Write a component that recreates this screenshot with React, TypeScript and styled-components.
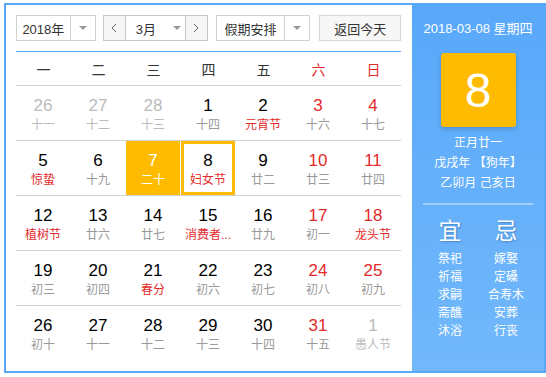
import React from "react";
import styled, { createGlobalStyle } from "styled-components";

const GlobalStyle = createGlobalStyle`
  html, body { margin: 0; padding: 0; background: #fff; }
  body { font-family: "Liberation Sans", "Noto Sans CJK SC", sans-serif; color: #333; }
`;

const BLUE = "#5aa9f9";
const ORANGE = "#ffbb00";
const RED = "#e32a2a";

const Frame = styled.div`
  margin: 3px 0 0 4px;
  width: 542px;
  height: 370px;
  box-sizing: border-box;
  border: 2px solid ${BLUE};
  display: flex;
  overflow: hidden;
`;

const Left = styled.div`
  width: 406px;
  box-sizing: border-box;
  padding: 10px 11px 0 10px;
  display: flex;
  flex-direction: column;
  background: #fff;
`;

const Toolbar = styled.div`
  display: flex;
  height: 26px;
  font-size: 13px;
  color: #333;
`;

const SelectBox = styled.div<{ $w: number; $ml?: number }>`
  display: flex;
  width: ${(p) => p.$w}px;
  margin-left: ${(p) => p.$ml ?? 0}px;
  height: 26px;
  box-sizing: border-box;
  border: 1px solid #d2d2d2;
  background: #fff;
`;

const SelectLabel = styled.div`
  flex: 1;
  display: flex;
  align-items: center;
  justify-content: center;
  white-space: nowrap;
`;

const ArrowPart = styled.div<{ $divider?: boolean }>`
  width: 24px;
  display: flex;
  align-items: center;
  justify-content: center;
  border-left: ${(p) => (p.$divider ? "1px solid #d2d2d2" : "none")};
`;

const Caret = styled.span`
  width: 0;
  height: 0;
  border-left: 4px solid transparent;
  border-right: 4px solid transparent;
  border-top: 4px solid #999;
`;

const MonthGroup = styled.div`
  display: flex;
  margin-left: 7px;
  height: 26px;
  box-sizing: border-box;
  border: 1px solid #c6c6c6;
`;

const NavBtn = styled.div<{ $side: "l" | "r" }>`
  width: 21px;
  display: flex;
  align-items: center;
  justify-content: center;
  background: #f6f6f6;
  color: #777;
  ${(p) => (p.$side === "l" ? "border-right: 1px solid #c6c6c6;" : "border-left: 1px solid #c6c6c6;")}
`;

const MonthSel = styled.div`
  width: 59px;
  display: flex;
  align-items: center;
  padding-left: 10px;
  box-sizing: border-box;
  gap: 17px;
`;

const TodayBtn = styled.div`
  margin-left: 9px;
  width: 82px;
  height: 26px;
  box-sizing: border-box;
  border: 1px solid #d6d6d6;
  background: #f7f7f7;
  display: flex;
  align-items: center;
  justify-content: center;
  color: #333;
`;

const BlueRule = styled.div`
  margin-top: 10px;
  height: 1px;
  background: ${BLUE};
`;

const Grid = styled.div`
  display: grid;
  grid-template-columns: repeat(7, 55px);
`;

const WeekHead = styled(Grid)`
  height: 33px;
  border-bottom: 1px solid #d0d0d0;
  align-items: center;
`;

const WeekName = styled.div<{ $red?: boolean }>`
  text-align: center;
  font-size: 14px;
  color: ${(p) => (p.$red ? RED : "#333")};
`;

const Row = styled(Grid)<{ $last?: boolean }>`
  height: 54px;
  border-bottom: ${(p) => (p.$last ? "none" : "1px solid #d0d0d0")};
`;

const Cell = styled.div<{ $sel?: boolean; $today?: boolean }>`
  width: 54px;
  height: 54px;
  box-sizing: border-box;
  padding-top: 10px;
  display: flex;
  flex-direction: column;
  align-items: center;
  background: ${(p) => (p.$sel ? ORANGE : "transparent")};
  box-shadow: ${(p) => (p.$today ? `inset 0 0 0 3px ${ORANGE}` : "none")};
`;

type Tone = "normal" | "red" | "other" | "white";
const toneColor = (t: Tone, lunar: boolean) => {
  if (t === "white") return "#fff";
  if (t === "other") return "#bbb";
  if (t === "red") return RED;
  return lunar ? "#999" : "#000";
};

const DayNum = styled.div<{ $tone: Tone }>`
  font-size: 17px;
  line-height: 20px;
  color: ${(p) => toneColor(p.$tone, false)};
`;

const Lunar = styled.div<{ $tone: Tone }>`
  font-size: 12px;
  line-height: 18px;
  white-space: nowrap;
  color: ${(p) => toneColor(p.$tone, true)};
`;

const Side = styled.div`
  width: 132px;
  background: linear-gradient(to bottom, #58a8fa, #72b8fb);
  color: #fff;
  display: flex;
  flex-direction: column;
  align-items: center;
`;

const SideDate = styled.div`
  margin-top: 14px;
  font-size: 13px;
  line-height: 20px;
  white-space: nowrap;
`;

const BigDay = styled.div`
  margin-top: 14px;
  width: 75px;
  height: 74px;
  border-radius: 3px;
  background: ${ORANGE};
  box-shadow: 0 2px 5px rgba(0, 0, 0, 0.18);
  display: flex;
  align-items: center;
  justify-content: center;
  font-size: 48px;
  color: #fff;
`;

const LunarInfo = styled.div`
  margin-top: 6px;
  font-size: 12px;
  line-height: 20px;
  text-align: center;
  white-space: nowrap;
`;

const SideRule = styled.div`
  margin-top: 10px;
  width: 110px;
  height: 2px;
  background: rgba(255, 255, 255, 0.4);
`;

const Advice = styled.div`
  margin-top: 12px;
  display: grid;
  grid-template-columns: repeat(2, 56px);
  text-align: center;
`;

const AdviceHead = styled.div`
  font-size: 23px;
  line-height: 28px;
  text-shadow: 1px 1px 2px rgba(0, 40, 90, 0.35);
  margin-bottom: 5px;
`;

const AdviceItem = styled.div`
  font-size: 12px;
  line-height: 18px;
  white-space: nowrap;
`;

const Chevron = ({ dir }: { dir: "l" | "r" }) => (
  <svg width="6" height="10" viewBox="0 0 6 10">
    <polyline
      points={dir === "l" ? "5,1 1,5 5,9" : "1,1 5,5 1,9"}
      fill="none"
      stroke="#666"
      strokeWidth="1"
    />
  </svg>
);

type Day = { n: number; l: string; nt: Tone; lt: Tone; sel?: boolean; today?: boolean };
const d = (n: number, l: string, nt: Tone = "normal", lt: Tone = "normal", extra: Partial<Day> = {}): Day => ({
  n, l, nt, lt, ...extra,
});

const weeks: Day[][] = [
  [d(26, "十一", "other", "other"), d(27, "十二", "other", "other"), d(28, "十三", "other", "other"), d(1, "十四"), d(2, "元宵节", "normal", "red"), d(3, "十六", "red"), d(4, "十七", "red")],
  [d(5, "惊蛰", "normal", "red"), d(6, "十九"), d(7, "二十", "white", "white", { sel: true }), d(8, "妇女节", "normal", "red", { today: true }), d(9, "廿二"), d(10, "廿三", "red"), d(11, "廿四", "red")],
  [d(12, "植树节", "normal", "red"), d(13, "廿六"), d(14, "廿七"), d(15, "消费者...", "normal", "red"), d(16, "廿九"), d(17, "初一", "red"), d(18, "龙头节", "red", "red")],
  [d(19, "初三"), d(20, "初四"), d(21, "春分", "normal", "red"), d(22, "初六"), d(23, "初七"), d(24, "初八", "red"), d(25, "初九", "red")],
  [d(26, "初十"), d(27, "十一"), d(28, "十二"), d(29, "十三"), d(30, "十四"), d(31, "十五", "red"), d(1, "愚人节", "other", "other")],
];

const weekNames = ["一", "二", "三", "四", "五", "六", "日"];
const yi = ["祭祀", "祈福", "求嗣", "斋醮", "沐浴"];
const ji = ["嫁娶", "定磉", "合寿木", "安葬", "行丧"];

export default function App() {
  return (
    <>
      <GlobalStyle />
      <Frame>
        <Left>
          <Toolbar>
            <SelectBox $w={80}>
              <SelectLabel>2018年</SelectLabel>
              <ArrowPart $divider>
                <Caret />
              </ArrowPart>
            </SelectBox>
            <MonthGroup>
              <NavBtn $side="l">
                <Chevron dir="l" />
              </NavBtn>
              <MonthSel>
                <span>3月</span>
                <Caret />
              </MonthSel>
              <NavBtn $side="r">
                <Chevron dir="r" />
              </NavBtn>
            </MonthGroup>
            <SelectBox $w={95} $ml={8}>
              <SelectLabel>假期安排</SelectLabel>
              <ArrowPart $divider>
                <Caret />
              </ArrowPart>
            </SelectBox>
            <TodayBtn>返回今天</TodayBtn>
          </Toolbar>
          <BlueRule />
          <WeekHead>
            {weekNames.map((w, i) => (
              <WeekName key={w} $red={i >= 5}>
                {w}
              </WeekName>
            ))}
          </WeekHead>
          {weeks.map((wk, wi) => (
            <Row key={wi} $last={wi === weeks.length - 1}>
              {wk.map((day, di) => (
                <Cell key={di} $sel={day.sel} $today={day.today}>
                  <DayNum $tone={day.nt}>{day.n}</DayNum>
                  <Lunar $tone={day.lt}>{day.l}</Lunar>
                </Cell>
              ))}
            </Row>
          ))}
        </Left>
        <Side>
          <SideDate>2018-03-08 星期四</SideDate>
          <BigDay>8</BigDay>
          <LunarInfo>
            正月廿一
            <br />
            戊戌年 【狗年】
            <br />
            乙卯月 己亥日
          </LunarInfo>
          <SideRule />
          <Advice>
            <div>
              <AdviceHead>宜</AdviceHead>
              {yi.map((t) => (
                <AdviceItem key={t}>{t}</AdviceItem>
              ))}
            </div>
            <div>
              <AdviceHead>忌</AdviceHead>
              {ji.map((t) => (
                <AdviceItem key={t}>{t}</AdviceItem>
              ))}
            </div>
          </Advice>
        </Side>
      </Frame>
    </>
  );
}
